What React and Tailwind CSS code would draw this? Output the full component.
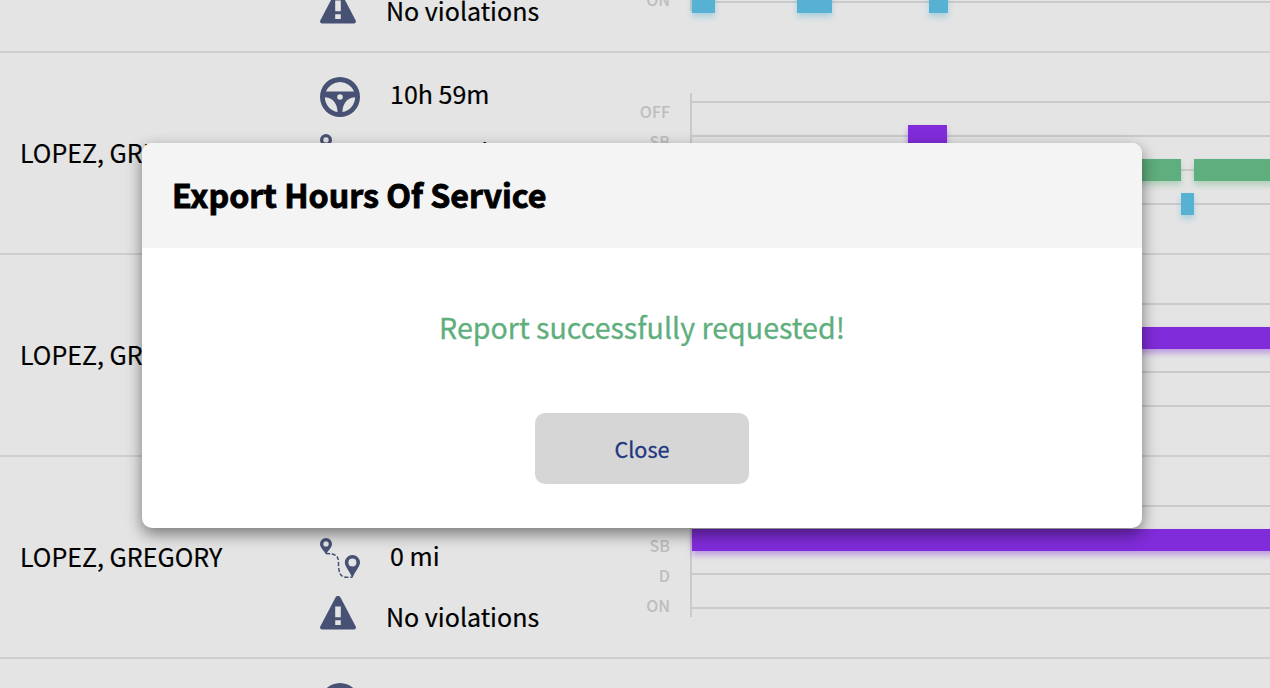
import { useState } from 'react';

const LANES = ['OFF', 'SB', 'D', 'ON'];

const BAR_STYLES = {
  SB: 'bg-[#802cda] shadow-[0_4px_6px_rgba(128,44,218,0.4)]',
  D: 'bg-[#5fae7d] shadow-[0_4px_6px_rgba(95,174,125,0.4)]',
  ON: 'bg-[#56b1d3] shadow-[0_4px_6px_rgba(86,177,211,0.4)]',
};

const LOGS = [
  {
    id: 1,
    driver: 'LOPEZ, GREGORY',
    driving: '8h 12m',
    distance: '486.3 mi',
    bars: [
      { lane: 'ON', start: 0, width: 23 },
      { lane: 'ON', start: 105, width: 35 },
      { lane: 'ON', start: 237, width: 19 },
    ],
  },
  {
    id: 2,
    driver: 'LOPEZ, GREGORY',
    driving: '10h 59m',
    distance: '593.2 mi',
    bars: [
      { lane: 'SB', start: 216, width: 39 },
      { lane: 'D', start: 255, width: 234 },
      { lane: 'ON', start: 489, width: 13 },
      { lane: 'D', start: 502, width: 200 },
    ],
  },
  {
    id: 3,
    driver: 'LOPEZ, GREGORY',
    driving: '0h 0m',
    distance: '0 mi',
    bars: [{ lane: 'SB', start: 0, width: 700 }],
  },
  {
    id: 4,
    driver: 'LOPEZ, GREGORY',
    driving: '0h 0m',
    distance: '0 mi',
    bars: [{ lane: 'SB', start: 0, width: 700 }],
  },
  { id: 5, driver: 'LOPEZ, GREGORY', driving: '0h 0m', distance: '0 mi', bars: [] },
];

function WheelIcon() {
  return (
    <svg viewBox="0 0 40 40" className="w-10 h-10 shrink-0" fill="#475174">
      <path
        fillRule="evenodd"
        d="M20 0a20 20 0 1 1 0 40a20 20 0 0 1 0-40ZM5.900 14.600H34.100A15.200 15.200 0 0 0 5.900 14.600ZM4.900 20.200A15.200 15.200 0 0 0 17.600 35C17.400 28 14 20.700 4.900 20.200ZM35.100 20.200A15.200 15.200 0 0 1 22.400 35C22.600 28 26 20.700 35.100 20.200ZM20 17.200a2.800 2.800 0 1 0 0 5.600a2.800 2.800 0 0 0 0-5.600Z"
      />
    </svg>
  );
}

function RouteIcon() {
  return (
    <svg viewBox="0 0 40 40" className="w-10 h-10 shrink-0" fill="#475174">
      <path fillRule="evenodd" d="M6 0a6 6 0 0 1 6 6c0 3.200-3.300 6-6 10.400C3.300 12 0 9.200 0 6a6 6 0 0 1 6-6Zm0 3.200a2.700 2.700 0 1 0 0 5.400a2.700 2.700 0 0 0 0-5.400Z" />
      <path fillRule="evenodd" d="M32.400 17a7.600 7.600 0 0 1 7.600 7.600c0 4-4.600 8.400-7.600 15.400c-3-7-7.600-11.400-7.600-15.400a7.600 7.600 0 0 1 7.600-7.600Zm0 3.400a4 4 0 1 0 0 8a4 4 0 0 0 0-8Z" />
      <path d="M6 15.600C15 15.600 18.500 17 18.500 25C18.500 34 20 39.200 26 39.200H32" fill="none" stroke="#475174" strokeWidth="1.500" strokeDasharray="4 1.800" />
    </svg>
  );
}

function WarningIcon() {
  return (
    <svg viewBox="0 0 36 34" className="w-9 h-[34px] shrink-0">
      <path
        d="M15.600 1.300c.9-1.600 3.900-1.600 4.800 0L35.600 30.300c.9 1.500.1 3.200-1.600 3.200H2C.3 33.500-.5 31.800.4 30.300Z"
        fill="#475174"
      />
      <path d="M15.200 10.500h5.600v10.800h-5.600ZM15.200 24.300h5.600v4.700h-5.600Z" fill="#e4e4e4" />
    </svg>
  );
}

function DutyChart({ bars }) {
  return (
    <div className="flex-1 flex pt-10">
      <div className="w-[70px] pt-[3px] text-right text-[16px] leading-[30px] font-medium text-[#bdbdbd] [-webkit-text-stroke:0px]">
        {LANES.map(lane => (
          <div key={lane}>{lane}</div>
        ))}
      </div>
      <div className="flex-1 ml-5 h-[120px] border-l-2 border-[#cacaca]">
        <div className="-mt-0.5 flex flex-col gap-3">
          {LANES.map(lane => (
            <div key={lane} className="relative h-[22px] flex items-center">
              <div className="w-full h-0.5 bg-[#cacaca]" />
              {bars.filter(b => b.lane === lane).map(b => (
                <div
                  key={b.start}
                  className={`absolute top-0 h-full ${BAR_STYLES[lane]}`}
                  style={{ left: b.start, width: b.width }}
                />
              ))}
            </div>
          ))}
        </div>
      </div>
    </div>
  );
}

function LogRow({ log }) {
  return (
    <div className="h-[202px] flex border-b-2 border-[#cecece] text-[25px] leading-[40px] [-webkit-text-stroke:0.2px]">
      <div className="w-80 pl-5 pb-0.5 flex items-center">{log.driver}</div>
      <div className="w-[280px] pt-6">
        <div className="flex gap-[30px]">
          <WheelIcon />
          <span className="-mt-1">{log.driving}</span>
        </div>
        <div className="mt-[17px] flex gap-[30px]">
          <RouteIcon />
          <span className="-mt-[3px]">{log.distance}</span>
        </div>
        <div className="mt-[18px] flex gap-[30px]">
          <WarningIcon />
          <span>No violations</span>
        </div>
      </div>
      <DutyChart bars={log.bars} />
    </div>
  );
}

function ExportModal({ onClose }) {
  return (
    <div className="absolute inset-0 pt-[143px] pl-[142px]">
      <div className="w-[1000px] h-[385px] rounded-[10px] overflow-hidden bg-white shadow-[0_6px_16px_rgba(0,0,0,0.48)]">
        <div className="h-[105px] px-[30px] pb-1 flex items-center bg-[#f4f4f4]">
          <h2 className="text-[32.2px] leading-[40px] font-bold [-webkit-text-stroke:0.9px]">Export Hours Of Service</h2>
        </div>
        <div className="pt-[59px] flex flex-col items-center">
          <p className="text-[28.6px] leading-[40px] text-[#5fae7d] [-webkit-text-stroke:0.3px]">Report successfully requested!</p>
          <button
            onClick={onClose}
            className="mt-[66px] w-[214px] h-[71px] rounded-[10px] bg-[#d6d6d6] text-[21.6px] leading-[32px] text-[#1f3780] [-webkit-text-stroke:0.3px]"
          >
            Close
          </button>
        </div>
      </div>
    </div>
  );
}

export default function App() {
  const [modalOpen, setModalOpen] = useState(true);

  return (
    <div className="relative h-[688px] overflow-hidden bg-[#e4e4e4] text-black font-['Noto_Sans_CJK_SC',sans-serif]">
      {/* Driver logs, scrolled part way into the first row */}
      <div className="-mt-[149px]">
        {LOGS.map(log => (
          <LogRow key={log.id} log={log} />
        ))}
      </div>

      {modalOpen && <ExportModal onClose={() => setModalOpen(false)} />}
    </div>
  );
}
